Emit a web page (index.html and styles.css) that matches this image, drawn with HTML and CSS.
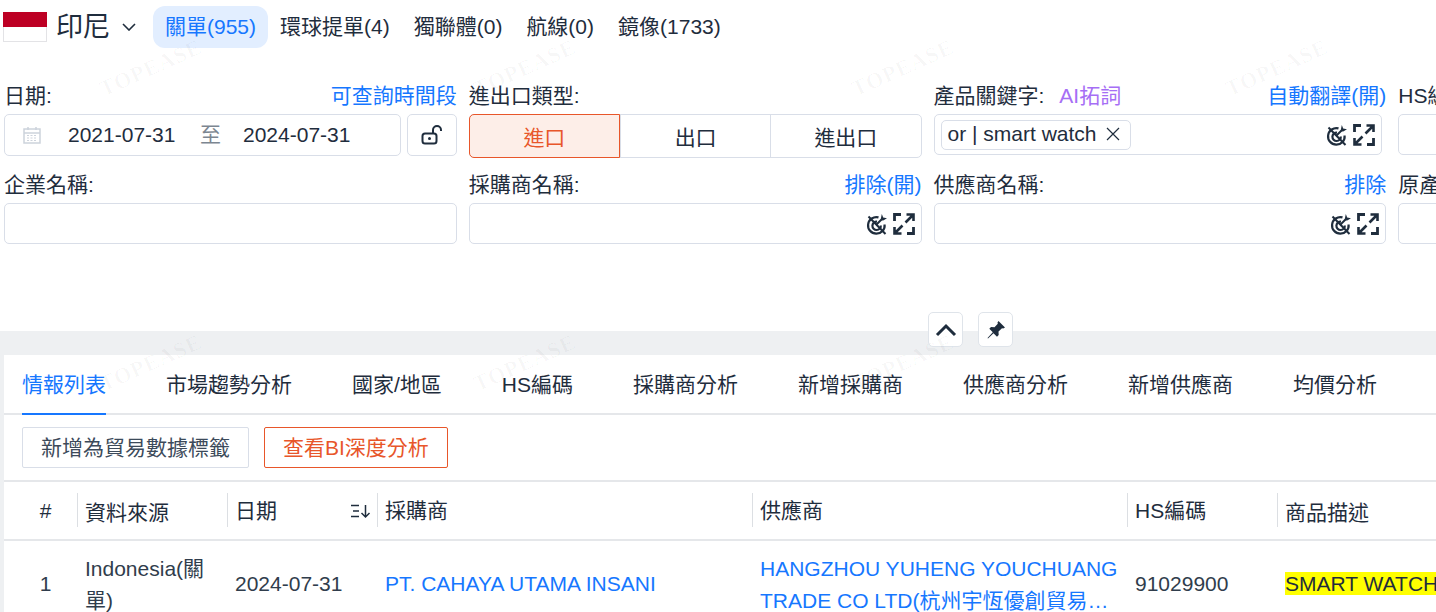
FILE: index.html
```html
<!DOCTYPE html>
<html lang="zh-Hant">
<head>
    <meta charset="UTF-8">
    <meta name="viewport" content="width=device-width, initial-scale=1.0">
    <title>關單 - 印尼</title>
    <link rel="stylesheet" href="styles.css">
</head>
<body>
    <div class="watermarks">
        <span class="wm wm-1">TOPEASE</span>
        <span class="wm wm-2">TOPEASE</span>
        <span class="wm wm-3">TOPEASE</span>
        <span class="wm wm-4">TOPEASE</span>
        <span class="wm wm-5">TOPEASE</span>
        <span class="wm wm-6">TOPEASE</span>
        <span class="wm wm-7">TOPEASE</span>
    </div>

    <svg class="sprites" width="0" height="0">
        <symbol id="no-target" viewBox="0 0 22 22">
            <path d="M12.500 4.400A8.300 8.300 0 1 0 18.600 11.500M11 8.600A4.200 4.200 0 1 0 14.800 12.500" fill="none" stroke="#1f2d3d" stroke-width="2.200"/>
            <path d="M2.500 3.500L19.500 21" stroke="#1f2d3d" stroke-width="2"/>
            <path d="M10 12l6.500-6.500" stroke="#1f2d3d" stroke-width="2"/>
            <path d="M15 5l.8-4 1.400 3.500 3.800.8-3.800 2.200-2.500-.2z" fill="#1f2d3d"/>
        </symbol>
        <symbol id="expand" viewBox="0 0 22 22">
            <path d="M1.500 8V1.500H8M14 20.500h6.500V14" fill="none" stroke="#1f2d3d" stroke-width="2.800"/>
            <path d="M12.500 9.500L20 2M13.500 1.500h7V8M9.500 12.500L2 20M8.500 20.500h-7V14" fill="none" stroke="#1f2d3d" stroke-width="2.600"/>
        </symbol>
    </svg>

    <header class="topbar">
        <div class="country">
            <svg class="flag" viewBox="0 0 44 30" width="44" height="30">
                <rect x="0.5" y="0.5" width="43" height="29" fill="#fff" stroke="#e3e3e6"/>
                <rect x="0" y="0" width="44" height="15" fill="#bd0024"/>
            </svg>
            <span class="country-name">印尼</span>
            <svg class="chevron" viewBox="0 0 14 8" width="14" height="8">
                <path d="M1 1l6 6 6-6" fill="none" stroke="#1f2d3d" stroke-width="1.600"/>
            </svg>
        </div>
        <nav class="source-tabs">
            <a class="source-tab active">關單(955)</a>
            <a class="source-tab">環球提單(4)</a>
            <a class="source-tab">獨聯體(0)</a>
            <a class="source-tab">航線(0)</a>
            <a class="source-tab">鏡像(1733)</a>
        </nav>
    </header>

    <section class="filters">
        <div class="field">
            <div class="field-label"><span>日期:</span><a class="link">可查詢時間段</a></div>
            <div class="date-row">
                <div class="box date-box">
                    <svg class="cal" viewBox="0 0 20 20" width="20" height="20">
                        <path d="M2 4h16v14H2zM2 8h16M6 2v3M14 2v3" fill="none" stroke="#cdd3dc" stroke-width="1.500"/>
                        <path d="M5 10.500h10M5 13h10M5 15.500h10" stroke="#cdd3dc" stroke-width="1.200" stroke-dasharray="2 1.500"/>
                    </svg>
                    <span class="date-val">2021-07-31</span>
                    <span class="date-sep">至</span>
                    <span class="date-val">2024-07-31</span>
                </div>
                <div class="box lock-box">
                    <svg viewBox="0 0 24 24" width="24" height="24">
                        <rect x="2.500" y="10.500" width="14" height="10" rx="2.500" fill="none" stroke="#1f2d3d" stroke-width="2"/>
                        <circle cx="9.500" cy="15.500" r="1.500" fill="#1f2d3d"/>
                        <path d="M13 10V7a4 4 0 0 1 8 0v1" fill="none" stroke="#1f2d3d" stroke-width="2"/>
                    </svg>
                </div>
            </div>
        </div>

        <div class="field">
            <div class="field-label"><span>進出口類型:</span></div>
            <div class="segments">
                <div class="segment selected">進口</div>
                <div class="segment">出口</div>
                <div class="segment">進出口</div>
            </div>
        </div>

        <div class="field">
            <div class="field-label">
                <span>產品關鍵字:<a class="ai-link">AI拓詞</a></span>
                <a class="link">自動翻譯(開)</a>
            </div>
            <div class="box input-box narrow">
                <span class="tag">or | smart watch
                    <svg viewBox="0 0 14 14" width="14" height="14"><path d="M1 1l12 12M13 1L1 13" stroke="#1f2d3d" stroke-width="1.200"/></svg>
                </span>
                <span class="input-icons">
                    <svg width="22" height="22"><use href="#no-target"/></svg>
                    <svg width="22" height="22"><use href="#expand"/></svg>
                </span>
            </div>
        </div>

        <div class="field">
            <div class="field-label"><span>HS編碼:</span></div>
            <div class="box input-box"></div>
        </div>

        <div class="field">
            <div class="field-label"><span>企業名稱:</span></div>
            <div class="box input-box"></div>
        </div>

        <div class="field">
            <div class="field-label"><span>採購商名稱:</span><a class="link">排除(開)</a></div>
            <div class="box input-box">
                <span class="input-icons">
                    <svg width="22" height="22"><use href="#no-target"/></svg>
                    <svg width="22" height="22"><use href="#expand"/></svg>
                </span>
            </div>
        </div>

        <div class="field">
            <div class="field-label"><span>供應商名稱:</span><a class="link">排除</a></div>
            <div class="box input-box">
                <span class="input-icons">
                    <svg width="22" height="22"><use href="#no-target"/></svg>
                    <svg width="22" height="22"><use href="#expand"/></svg>
                </span>
            </div>
        </div>

        <div class="field">
            <div class="field-label"><span>原產國:</span></div>
            <div class="box input-box"></div>
        </div>
    </section>

    <div class="band">
        <div class="band-buttons">
            <button class="band-btn">
                <svg viewBox="0 0 22 14" width="22" height="14"><path d="M2 12l9-9 9 9" fill="none" stroke="#1f2d3d" stroke-width="3"/></svg>
            </button>
            <button class="band-btn">
                <svg viewBox="0 0 20 20" width="20" height="20">
                    <path d="M12.500 1L19 7.500l-1.800 1-1.200-.3-3.500 3.300.2 3.500-1.700 1.700-3.500-3.500L2 18.500 1.500 18l5.300-5.800-3.500-3.500L5 7l3.500.2L11.800 3.700l-.3-1.200z" fill="#1f2d3d"/>
                </svg>
            </button>
        </div>
    </div>

    <div class="panel-wrap">
        <main class="panel">
            <nav class="tabs">
                <a class="tab active">情報列表</a>
                <a class="tab">市場趨勢分析</a>
                <a class="tab">國家/地區</a>
                <a class="tab">HS編碼</a>
                <a class="tab">採購商分析</a>
                <a class="tab">新增採購商</a>
                <a class="tab">供應商分析</a>
                <a class="tab">新增供應商</a>
                <a class="tab">均價分析</a>
            </nav>

            <div class="actions">
                <button class="btn">新增為貿易數據標籤</button>
                <button class="btn btn-orange">查看BI深度分析</button>
            </div>

            <div class="grid-table">
                <div class="row head">
                    <div class="cell num"><span class="head-txt">#</span></div>
                    <div class="cell low"><span class="head-txt">資料來源</span></div>
                    <div class="cell date-head">
                        <span class="head-txt">日期</span>
                        <svg viewBox="0 0 22 16" width="22" height="16">
                            <path d="M1 2.500h8M3 8h6M1 13.500h8M15.500 2v11.500M11.500 10l4 4 4-4" fill="none" stroke="#1f2d3d" stroke-width="1.500"/>
                        </svg>
                    </div>
                    <div class="cell"><span class="head-txt">採購商</span></div>
                    <div class="cell"><span class="head-txt">供應商</span></div>
                    <div class="cell"><span class="head-txt">HS編碼</span></div>
                    <div class="cell low"><span class="head-txt">商品描述</span></div>
                </div>
                <div class="row body-row">
                    <div class="cell num one">1</div>
                    <div class="cell">Indonesia(關單)</div>
                    <div class="cell one">2024-07-31</div>
                    <div class="cell one"><a class="blue">PT. CAHAYA UTAMA INSANI</a></div>
                    <div class="cell"><a class="blue clamp">HANGZHOU YUHENG YOUCHUANG TRADE CO LTD(杭州宇恆優創貿易有限公司)</a></div>
                    <div class="cell one">91029900</div>
                    <div class="cell nowrap one"><mark>SMART WATCH</mark></div>
                </div>
            </div>
        </main>
    </div>
</body>
</html>
```

FILE: styles.css
```css
* {
    box-sizing: border-box;
}
html, body {
    height: 612px;
    overflow: hidden;
}
body {
    position: relative;
    margin: 0;
    background: #fff;
    color: #1f2d3d;
    font-family: "Liberation Sans", "Noto Sans CJK TC", Arial, sans-serif;
    font-size: 21px;
    line-height: 1.6;
}
a {
    cursor: pointer;
}
.sprites {
    position: absolute;
}

/* watermark text over everything */
.watermarks {
    pointer-events: none;
}
.wm {
    position: absolute;
    z-index: 5;
    color: rgba(0, 0, 0, 0.03);
    font-family: "Liberation Serif", serif;
    font-size: 22px;
    font-weight: 700;
    letter-spacing: 1px;
    transform: rotate(-24deg);
}
.wm-1 { left: 96px; top: 50px; }
.wm-2 { left: 470px; top: 50px; }
.wm-3 { left: 848px; top: 50px; }
.wm-4 { left: 1222px; top: 50px; }
.wm-5 { left: 96px; top: 345px; }
.wm-6 { left: 470px; top: 345px; }
.wm-7 { left: 848px; top: 345px; }

.topbar {
    display: flex;
    align-items: center;
    height: 54px;
    padding-left: 3px;
}
.country {
    display: flex;
    align-items: center;
    width: 150px;
}
.flag {
    flex: none;
}
.country-name {
    margin-left: 9px;
    font-size: 27px;
    line-height: 1;
}
.chevron {
    margin-left: 12px;
}
.source-tabs {
    display: flex;
}
.source-tab {
    height: 42px;
    padding: 0 12px;
    line-height: 42px;
    border-radius: 12px;
    white-space: nowrap;
}
.source-tab.active {
    color: #1677ff;
    background: #e2eeff;
}

.filters {
    display: grid;
    grid-template-columns: repeat(4, 452.750px);
    grid-auto-rows: 89px;
    column-gap: 12px;
    height: 277px;
    padding: 27px 0 0 4px;
}
.field-label {
    display: flex;
    justify-content: space-between;
    align-items: center;
    height: 33px;
    padding-bottom: 3px;
    white-space: nowrap;
}
.link {
    color: #1677ff;
}
.ai-link {
    margin-left: 15px;
    color: #a66ef5;
}
.box {
    border: 1px solid #d9dee8;
    border-radius: 5px;
    background: #fff;
}
.date-row {
    display: flex;
    gap: 6px;
}
.date-box {
    display: flex;
    align-items: center;
    width: 397px;
    height: 42px;
    padding-left: 17px;
}
.cal {
    flex: none;
}
.date-val {
    width: 106px;
    margin-left: 26px;
    white-space: nowrap;
}
.date-sep {
    margin-left: 26px;
    margin-right: -4px;
    color: #7c8691;
}
.lock-box {
    display: flex;
    align-items: center;
    justify-content: center;
    width: 50px;
    height: 42px;
}
.segments {
    display: flex;
    height: 44px;
    border: 1px solid #d9dee8;
    border-radius: 5px;
}
.segment {
    flex: 1;
    display: flex;
    align-items: center;
    justify-content: center;
    padding-top: 3px;
    border-left: 1px solid #d9dee8;
}
.segment:first-child {
    border-left: 0;
}
.segment.selected {
    margin: -1px 0 -1px -1px;
    color: #e8562a;
    background: #fdeee8;
    border: 1px solid #e8562a;
    border-radius: 5px 0 0 5px;
}
.input-box {
    display: flex;
    align-items: center;
    height: 41px;
    padding: 0 6px 0 6px;
}
.input-box.narrow {
    width: 448px;
}
.tag {
    display: flex;
    align-items: center;
    gap: 9px;
    height: 30px;
    padding: 0 10px 1px 6px;
    border: 1px solid #d9dee8;
    border-radius: 5px;
    white-space: nowrap;
}
.input-icons {
    display: flex;
    gap: 5px;
    margin-left: auto;
}

.band {
    display: flex;
    height: 24px;
    padding-left: 928px;
    background: #eef0f2;
}
.band-buttons {
    display: flex;
    gap: 15px;
    height: 35px;
    margin-top: -19px;
}
.band-btn {
    display: flex;
    align-items: center;
    justify-content: center;
    width: 35px;
    height: 35px;
    padding: 0;
    border: 1px solid #dfe4ea;
    border-radius: 5px;
    background: #fff;
}

.panel-wrap {
    height: 257px;
    padding-left: 4px;
    background: #eef0f2;
}
.panel {
    height: 100%;
    background: #fff;
}
.tabs {
    display: flex;
    gap: 60px;
    height: 60px;
    padding-left: 18px;
    border-bottom: 2px solid #e5e7ea;
    white-space: nowrap;
}
.tab {
    height: 60px;
    line-height: 60px;
}
.tab.active {
    color: #1677ff;
    border-bottom: 2px solid #1677ff;
}
.actions {
    display: flex;
    gap: 15px;
    height: 67px;
    padding: 12px 0 0 18px;
    border-bottom: 2px solid #e5e7ea;
}
.btn {
    height: 41px;
    padding: 0 18px;
    font: inherit;
    color: #3c4a5a;
    background: #fff;
    border: 1px solid #d9dee8;
    border-radius: 2px;
}
.btn-orange {
    color: #e8562a;
    border-color: #e8562a;
}

.row {
    display: grid;
    grid-template-columns: 73px 150px 150px 375px 375px 150px 1fr;
}
.head {
    height: 59px;
    border-bottom: 2px solid #e5e7ea;
}
.head .cell {
    position: relative;
    display: flex;
    align-items: center;
}
.head .cell.low .head-txt {
    position: relative;
    top: 2px;
}
.head .cell::before {
    content: "";
    position: absolute;
    left: 0;
    top: 11px;
    height: 34px;
    width: 1px;
    background: #dcdfe3;
}
.head .cell.num::before {
    display: none;
}
.date-head {
    justify-content: space-between;
    padding-right: 5px !important;
}
.cell {
    padding: 0 7px 0 8px;
    overflow: hidden;
}
.cell.one {
    padding-bottom: 2px;
}
.num {
    justify-content: center;
    padding-left: 10px;
    padding-right: 0;
    text-align: center;
}
.body-row {
    align-items: center;
    height: 88px;
    color: #303d4c;
    line-height: 32px;
}
.blue {
    color: #1677ff;
}
.clamp {
    display: -webkit-box;
    -webkit-line-clamp: 2;
    -webkit-box-orient: vertical;
    overflow: hidden;
}
.nowrap {
    white-space: nowrap;
}
mark {
    color: #1f2d3d;
    background: #ffff00;
}
```
